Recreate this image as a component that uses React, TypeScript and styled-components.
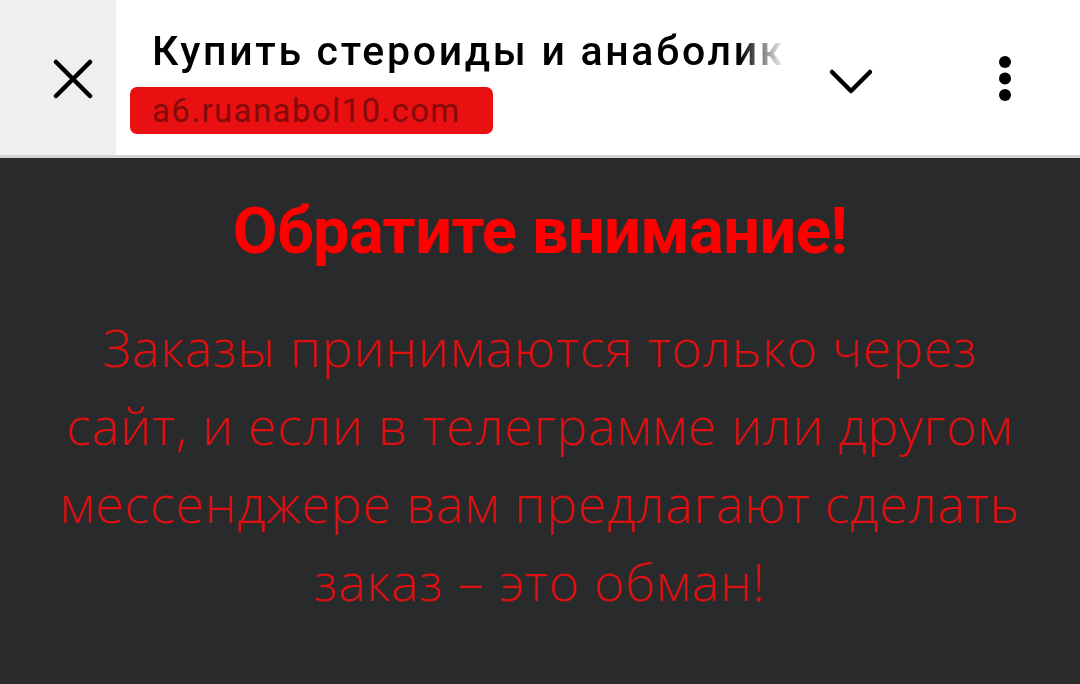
import styled, { createGlobalStyle } from "styled-components";

const GlobalStyle = createGlobalStyle`
  html, body {
    margin: 0;
    padding: 0;
    background: #292a2c;
  }
  body {
    font-family: Roboto, "Noto Sans", sans-serif;
  }
`;

function CloseIcon() {
  return (
    <svg width="40" height="40" viewBox="0 0 40 40">
      <path
        d="M3 3 L37 37 M37 3 L3 37"
        stroke="#000"
        strokeWidth="4.5"
        strokeLinecap="round"
      />
    </svg>
  );
}

function ChevronIcon() {
  return (
    <svg width="46" height="30" viewBox="0 0 46 30">
      <path
        d="M4 6 L23 25 L42 6"
        stroke="#000"
        strokeWidth="4.5"
        strokeLinecap="round"
        strokeLinejoin="round"
        fill="none"
      />
    </svg>
  );
}

function MoreIcon() {
  return (
    <svg width="14" height="47" viewBox="0 0 14 47">
      <circle cx="7" cy="7" r="6" fill="#000" />
      <circle cx="7" cy="23.5" r="6" fill="#000" />
      <circle cx="7" cy="40" r="6" fill="#000" />
    </svg>
  );
}

export default function App() {
  return (
    <>
      <GlobalStyle />
      <Page>
        <TopBar>
          <CloseArea>
            <CloseIcon />
          </CloseArea>
          <TitleBlock>
            <Title>Купить стероиды и анаболики</Title>
            <UrlPill>a6.ruanabol10.com</UrlPill>
          </TitleBlock>
          <ChevronButton>
            <ChevronIcon />
          </ChevronButton>
          <MoreButton>
            <MoreIcon />
          </MoreButton>
        </TopBar>
        <Notice>
          <Heading>Обратите внимание!</Heading>
          <Message>
            Заказы принимаются только через сайт, и если в телеграмме или
            другом мессенджере вам предлагают сделать заказ – это обман!
          </Message>
        </Notice>
      </Page>
    </>
  );
}

const Page = styled.div`
  width: 1080px;
  min-height: 684px;
  background: #292a2c;
`;

const TopBar = styled.header`
  height: 155px;
  display: grid;
  grid-template-columns: 116px 674px 122px 1fr;
  background: #fff;
  border-bottom: 3px solid #d4d4d4;
`;

const CloseArea = styled.div`
  background: #efefef;
  display: flex;
  align-items: center;
  padding: 3px 0 0 53px;
`;

const TitleBlock = styled.div`
  display: flex;
  flex-direction: column;
  align-items: flex-start;
  padding-top: 27px;
  overflow: hidden;
`;

const Title = styled.div`
  width: 633px;
  margin-left: 36px;
  font-size: 41px;
  font-weight: 500;
  line-height: 48px;
  letter-spacing: 2.7px;
  color: #000;
  white-space: nowrap;
  overflow: hidden;
  -webkit-mask-image: linear-gradient(to right, #000 588px, transparent 633px);
  mask-image: linear-gradient(to right, #000 588px, transparent 633px);
`;

const UrlPill = styled.div`
  margin: 12px 0 0 14px;
  width: 363px;
  height: 47px;
  box-sizing: border-box;
  padding: 1px 0 0 22px;
  background: #e81010;
  border-radius: 7px;
  color: #850b0b;
  font-size: 33px;
  font-weight: 400;
  line-height: 45px;
  letter-spacing: 1.4px;
  white-space: nowrap;
`;

const ChevronButton = styled.div`
  display: flex;
  align-items: center;
  justify-content: center;
  padding-top: 7px;
`;

const MoreButton = styled.div`
  display: flex;
  align-items: center;
  padding: 2px 0 0 86px;
`;

const Notice = styled.section`
  display: flex;
  flex-direction: column;
  align-items: center;
  padding-top: 38px;
  text-align: center;
`;

const Heading = styled.h1`
  margin: 0;
  font-family: Roboto, "Noto Sans", sans-serif;
  font-size: 65px;
  font-weight: 700;
  line-height: 70px;
  letter-spacing: -0.6px;
  color: #ff0000;
`;

const Message = styled.p`
  margin: 42px 0 0;
  width: 1000px;
  font-family: "Open Sans", "Noto Sans", sans-serif;
  font-size: 52px;
  font-weight: 300;
  line-height: 78px;
  letter-spacing: 0.7px;
  color: #e01010;
`;
